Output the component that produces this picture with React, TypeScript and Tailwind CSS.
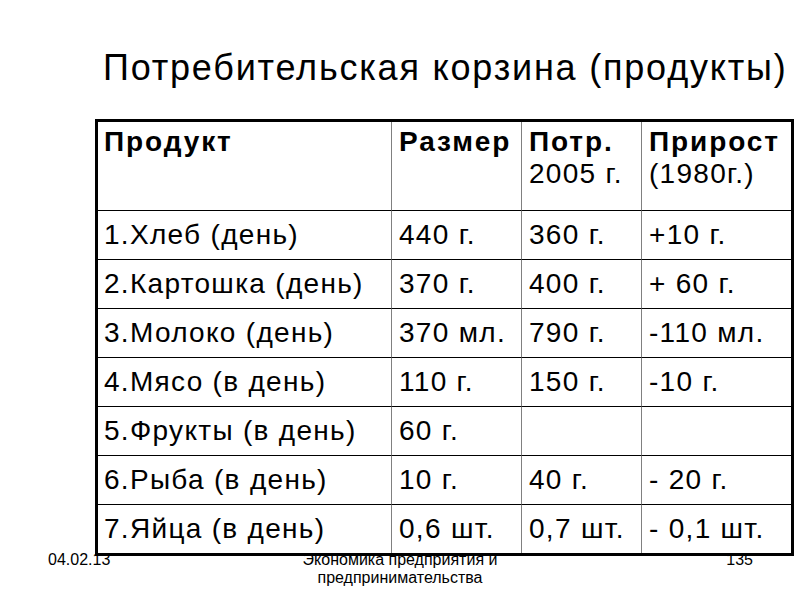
import React from 'react';

const rows = [
  ['1.Хлеб (день)', '440 г.', '360 г.', '+10 г.'],
  ['2.Картошка (день)', '370 г.', '400 г.', '+ 60 г.'],
  ['3.Молоко (день)', '370 мл.', '790 г.', '-110 мл.'],
  ['4.Мясо (в день)', '110 г.', '150 г.', '-10 г.'],
  ['5.Фрукты (в день)', '60 г.', '', ''],
  ['6.Рыба (в день)', '10 г.', '40 г.', '- 20 г.'],
  ['7.Яйца (в день)', '0,6 шт.', '0,7 шт.', '- 0,1 шт.'],
];

function App() {
  return (
    <div className="w-[800px] h-[600px] bg-white text-black overflow-hidden font-['Liberation_Sans',Arial,sans-serif]">
      {/* Title */}
      <h1 className="pt-[44px] pl-[103px] text-[36px] leading-[48px] tracking-[1.8px] font-normal whitespace-nowrap">
        Потребительская корзина (продукты)
      </h1>

      {/* Table */}
      <table className="mt-[27px] ml-[95px] table-fixed border-separate border-spacing-0 border-[3px] border-black text-[28px] leading-[32px] tracking-[1.3px]">
        <colgroup>
          <col className="w-[294px]" />
          <col className="w-[130px]" />
          <col className="w-[120px]" />
          <col className="w-[149px]" />
        </colgroup>
        <thead>
          <tr className="h-[89px] align-top">
            <th className="text-left font-bold tracking-[1.9px] pl-[6px] pt-[4px] border-r border-b border-r-[#808080] border-b-black">Продукт</th>
            <th className="text-left font-bold tracking-[1.9px] pl-[7px] pt-[4px] border-r border-b border-r-[#808080] border-b-black">Размер</th>
            <th className="text-left pl-[7px] pt-[4px] border-r border-b border-r-[#808080] border-b-black">
              <div className="font-bold tracking-[1.9px]">Потр.</div>
              <div className="font-normal">2005 г.</div>
            </th>
            <th className="text-left pl-[7px] pt-[4px] border-b border-b-black">
              <div className="font-bold tracking-[1.9px]">Прирост</div>
              <div className="font-normal">(1980г.)</div>
            </th>
          </tr>
        </thead>
        <tbody>
          {rows.map((r, i) => {
            const last = i === rows.length - 1;
            return (
              <tr key={i} className={last ? 'h-[48px]' : 'h-[49px]'}>
                {r.map((c, j) => (
                  <td
                    key={j}
                    className={`${j === 0 ? 'pl-[6px]' : 'pl-[7px]'} align-middle whitespace-nowrap ${j < 3 ? 'border-r border-r-[#808080]' : ''} ${last ? '' : 'border-b border-b-black'}`}
                  >
                    {c}
                  </td>
                ))}
              </tr>
            );
          })}
        </tbody>
      </table>

      {/* Footer */}
      <div className="flex items-start mt-[-5px] text-[16px] leading-[18px]">
        <div className="w-[300px] pl-[48px]">04.02.13</div>
        <div className="w-[200px] text-center">
          Экономика предприятия и<br />предпринимательства
        </div>
        <div className="w-[253px] text-right">135</div>
      </div>
    </div>
  );
}

export default App;
